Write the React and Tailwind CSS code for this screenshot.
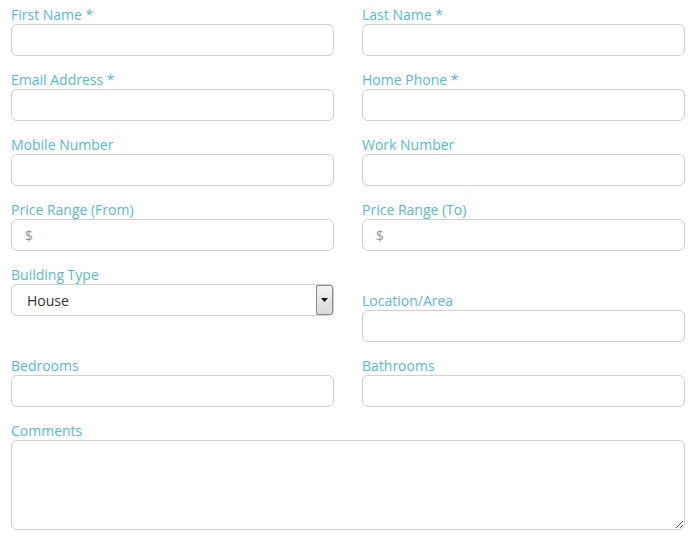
import React from "react";

const labelCls = "block h-[20px] pt-[1px] text-[14px] leading-[20px] text-[#57bace]";
const inputCls =
  "block w-full h-[32px] rounded-[6px] border border-[#cfcfcf] bg-white px-[13px] text-[14px] text-[#333] outline-none placeholder:text-[#999]";

function Field({ label, placeholder, className = "" }) {
  return (
    <div className={className}>
      <label className={labelCls}>{label}</label>
      <input type="text" placeholder={placeholder} className={inputCls} />
    </div>
  );
}

export default function App() {
  return (
    <div
      className="w-[696px] h-[537px] bg-white pt-[4px] pl-[11px] pr-[11px]"
      style={{ fontFamily: '"Open Sans", "Liberation Sans", sans-serif' }}
    >
      <div className="grid grid-cols-2 gap-x-[28px] gap-y-[13px]">
        <Field label="First Name *" />
        <Field label="Last Name *" />
        <Field label="Email Address *" />
        <Field label="Home Phone *" />
        <Field label="Mobile Number" />
        <Field label="Work Number" />
        <Field label="Price Range (From)" placeholder="$" />
        <Field label="Price Range (To)" placeholder="$" />

        {/* building type select */}
        <div>
          <label className={labelCls}>Building Type</label>
          <div className="relative h-[32px] rounded-[6px] border border-[#cfcfcf] bg-white pl-[15px] flex items-center text-[14px] text-[#333]">
            House
            <div className="absolute right-0 top-0 h-[30px] w-[17px] border border-[#8a8a8a] rounded-[2px] bg-gradient-to-b from-[#f4f4f4] to-[#d9d9d9] flex items-center justify-center">
              <svg width="7" height="4" viewBox="0 0 7 4">
                <path d="M0 0h7L3.5 4z" fill="#111" />
              </svg>
            </div>
          </div>
        </div>
        <Field label="Location/Area" className="mt-[26px]" />

        <Field label="Bedrooms" />
        <Field label="Bathrooms" />

        <div className="col-span-2">
          <label className={labelCls}>Comments</label>
          <textarea className="block w-full h-[90px] rounded-[6px] border border-[#cfcfcf] bg-white px-[13px] py-[6px] text-[14px] outline-none resize" />
        </div>
      </div>
    </div>
  );
}
